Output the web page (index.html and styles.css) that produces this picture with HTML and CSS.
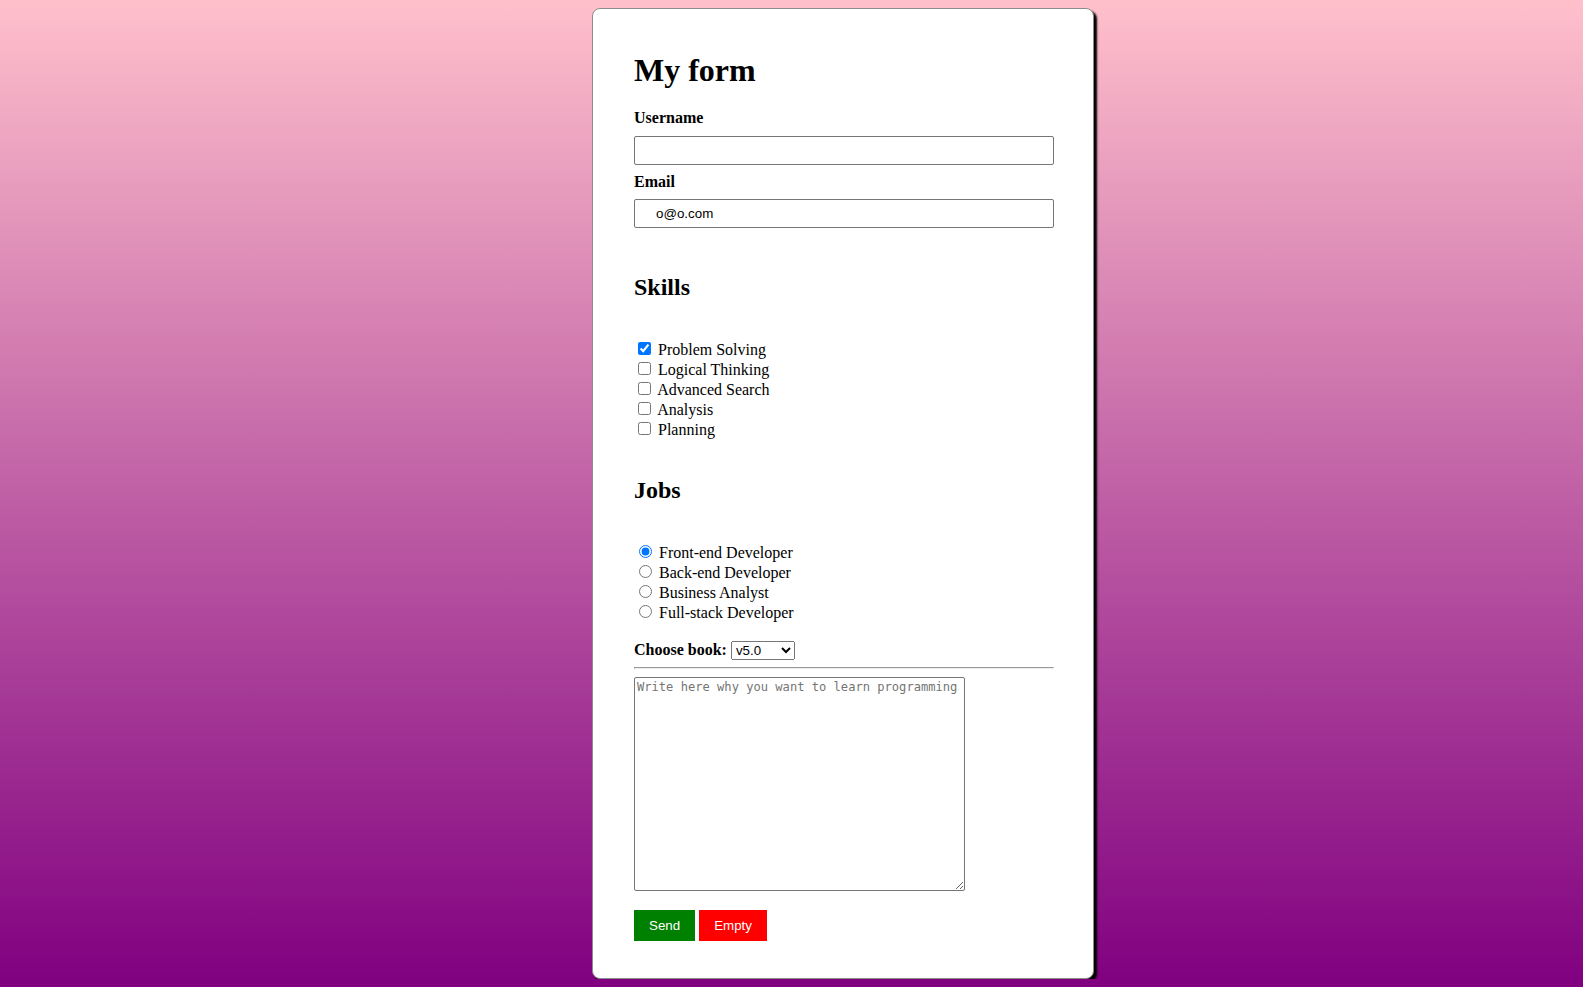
FILE: index.html
```html
<!DOCTYPE html>
<html lang="en">
<head>
<meta charset="utf-8">
<title>My form</title>
<link rel="stylesheet" href="styles.css">
</head>
<body>
<form class="card">
  <h1 class="title">My form</h1>
  <label class="field-label" for="username">Username</label>
  <input class="text-input" type="text" id="username">
  <label class="field-label" for="email">Email</label>
  <input class="text-input" type="email" id="email" value="o@o.com">

  <h2 class="section-title">Skills</h2>
  <div class="options">
    <div class="opt"><input type="checkbox" id="s1" checked> <label for="s1">Problem Solving</label></div>
    <div class="opt"><input type="checkbox" id="s2"> <label for="s2">Logical Thinking</label></div>
    <div class="opt"><input type="checkbox" id="s3"> <label for="s3">Advanced Search</label></div>
    <div class="opt"><input type="checkbox" id="s4"> <label for="s4">Analysis</label></div>
    <div class="opt"><input type="checkbox" id="s5"> <label for="s5">Planning</label></div>
  </div>

  <h2 class="section-title jobs">Jobs</h2>
  <div class="options">
    <div class="opt"><input type="radio" name="job" id="j1" checked> <label for="j1">Front-end Developer</label></div>
    <div class="opt"><input type="radio" name="job" id="j2"> <label for="j2">Back-end Developer</label></div>
    <div class="opt"><input type="radio" name="job" id="j3"> <label for="j3">Business Analyst</label></div>
    <div class="opt"><input type="radio" name="job" id="j4"> <label for="j4">Full-stack Developer</label></div>
  </div>

  <div class="book-row">
    <label class="book-label" for="book">Choose book:</label>
    <select class="book-select" id="book">
      <option>v5.0</option>
      <option>v4.0</option>
    </select>
  </div>
  <hr class="divider">
  <textarea class="message" placeholder="Write here why you want to learn programming"></textarea>
  <div class="actions">
    <button type="submit" class="btn btn-send">Send</button>
    <button type="reset" class="btn btn-empty">Empty</button>
  </div>
</form>
</body>
</html>
```

FILE: styles.css
```css
html {
  min-height: 100%;
  background: linear-gradient(to bottom, #ffc0cb 0%, #800080 100%);
}

body {
  margin: 8px 0;
  font-family: "Liberation Serif", "Times New Roman", serif;
  font-size: 16px;
  color: #000;
}

.card {
  margin-left: 592px;
  width: 420px;
  padding: 22px 39px 37px 41px;
  background: #fff;
  border: 1px solid #8c8c8c;
  border-radius: 8px;
  box-shadow: 3px 3px 2px #000;
}

.title {
  margin: 21px 0 20px;
  font-size: 32px;
  line-height: 37px;
  font-weight: bold;
}

.field-label {
  display: block;
  font-weight: bold;
  margin-bottom: 8.5px;
}

.text-input {
  display: block;
  box-sizing: border-box;
  width: 420px;
  height: 29px;
  margin: 0 0 8px;
  padding: 0 21px;
  border: 1px solid #767676;
  border-radius: 2px;
  font-family: "Liberation Sans", Arial, sans-serif;
  font-size: 13.333px;
  color: #000;
  background: #fff;
}

.section-title {
  margin: 46px 0 38.3px;
  font-size: 24px;
  font-weight: bold;
}

.section-title.jobs {
  margin-top: 37.5px;
}

.opt {
  height: 20px;
}

.book-row {
  margin-top: 18.5px;
}

.book-label {
  font-weight: bold;
}

.book-select {
  width: 64px;
  height: 19px;
  font-family: "Liberation Sans", Arial, sans-serif;
  font-size: 13.333px;
}

.divider {
  margin: 7.5px 0 8px;
}

.message {
  display: block;
  box-sizing: border-box;
  width: 331px;
  height: 214px;
  margin: 0 0 19px;
  padding: 2px;
  border: 1px solid #767676;
  border-radius: 2px;
  font-family: "DejaVu Sans Mono", "Liberation Mono", monospace;
  font-size: 12.1px;
}

.message::placeholder {
  color: #757575;
}

.actions {
  display: flex;
  gap: 4px;
}

.btn {
  border: none;
  padding: 8px 15px;
  font-family: "Liberation Sans", Arial, sans-serif;
  font-size: 13.333px;
  line-height: 15px;
  color: #fff;
  cursor: pointer;
}

.btn-send {
  background: #008000;
}

.btn-empty {
  background: #ff0000;
}
```
